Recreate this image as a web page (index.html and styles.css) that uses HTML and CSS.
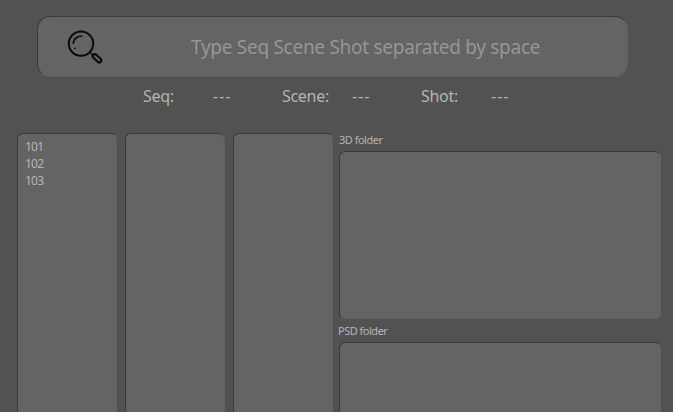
FILE: index.html
```html
<!DOCTYPE html>
<html lang="en">
<head>
<meta charset="utf-8">
<title>Shot browser</title>
<link rel="stylesheet" href="styles.css">
</head>
<body>
<main class="app">
  <label class="search panel">
    <svg class="search-icon" viewBox="0 0 38 36" fill="none" stroke="#0b0b0b" stroke-linecap="round" stroke-linejoin="round">
      <circle cx="15" cy="14.6" r="12.2" stroke-width="2"/>
      <path d="M7.3 14.2C7.4 10.4 10.8 7.2 15.6 7" stroke-width="1.7"/>
      <circle cx="9" cy="19.3" r=".9" fill="#0b0b0b" stroke="none"/>
      <path d="M25 24.4l2 1.8" stroke-width="1.5"/>
      <rect x="-5" y="-2.1" width="10" height="4.2" rx="2.1" transform="translate(31 29.3) rotate(44)" stroke-width="2.2"/>
    </svg>
    <input class="search-input" type="text" placeholder="Type Seq Scene Shot separated by space">
  </label>
  <div class="status">
    <span>Seq:</span><span class="dashes">---</span>
    <span>Scene:</span><span class="dashes">---</span>
    <span>Shot:</span><span class="dashes">---</span>
  </div>
  <div class="columns">
    <ul class="list panel"><li>101</li><li>102</li><li>103</li></ul>
    <ul class="list panel"></ul>
    <ul class="list panel"></ul>
    <section class="folders">
      <h2>3D folder</h2>
      <div class="folder panel"></div>
      <h2 class="psd">PSD folder</h2>
      <div class="folder folder-last panel"></div>
    </section>
  </div>
</main>
</body>
</html>
```
FILE: styles.css
```css
* { box-sizing: border-box; }
body {
  margin: 0;
  height: 412px;
  overflow: hidden;
  background: #525252;
  color: #b4b4b4;
  font-family: Tahoma, "Noto Sans", sans-serif;
}
.app { padding: 16px 12px 0 17px; }
.panel {
  background: #646464;
  border: 1px solid;
  border-color: #3a3a3a #606060 #606060 #3a3a3a;
  border-radius: 6px;
}
.search {
  display: flex;
  align-items: center;
  width: 591px;
  height: 61px;
  margin-left: 20px;
  padding-left: 28px;
  border-radius: 13px;
}
.search-icon { width: 38px; height: 36px; flex: none; }
.search-input {
  width: 440px;
  margin-left: 87px;
  padding: 0;
  border: 0;
  outline: 0;
  background: none;
  color: #b4b4b4;
  font: 19px/28px Tahoma, "Noto Sans", sans-serif;
  letter-spacing: -0.28px;
}
.search-input::placeholder { color: #969696; opacity: 1; }
.status {
  display: grid;
  grid-template-columns: 70px 69px 70px 69px 70px 69px;
  height: 56px;
  padding: 7px 0 0 126px;
  font-size: 16px;
  line-height: 24px;
  letter-spacing: -0.3px;
}
.dashes { letter-spacing: 1px; }
.columns { display: flex; gap: 8px; }
.list {
  width: 100px;
  height: 279px;
  margin: 0;
  padding: 4px 7px;
  border-bottom: 0;
  border-bottom-left-radius: 0;
  border-bottom-right-radius: 0;
  list-style: none;
  font-size: 12px;
  line-height: 17px;
  letter-spacing: -0.8px;
}
.folders { width: 322px; margin-left: -2px; }
h2 {
  height: 18px;
  margin: 0;
  font-size: 11px;
  line-height: 14px;
  font-weight: 400;
  letter-spacing: -0.5px;
}
.psd { height: 23px; margin-left: -1px; padding-top: 5px; }
.folder { height: 168px; }
.folder-last {
  height: 70px;
  border-bottom: 0;
  border-bottom-left-radius: 0;
  border-bottom-right-radius: 0;
}
```
